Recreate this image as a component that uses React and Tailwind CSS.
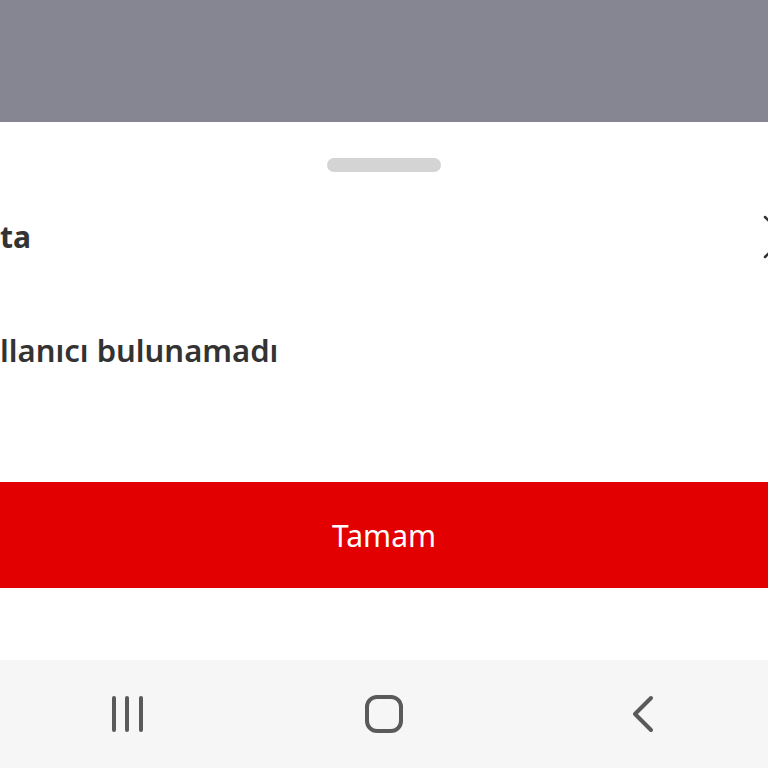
import React from "react";

const font = { fontFamily: '"Noto Sans", "Open Sans", sans-serif' };

function NavBar() {
    return (
        <div className="h-[108px] bg-[#f6f6f6] grid grid-cols-3 items-center">
            <div className="flex justify-center">
                <svg width="34" height="38" viewBox="0 0 34 38" fill="none" stroke="#5a5a5a" strokeWidth="4" strokeLinecap="round">
                    <line x1="3" y1="3" x2="3" y2="35" />
                    <line x1="16" y1="3" x2="16" y2="35" />
                    <line x1="30" y1="3" x2="30" y2="35" />
                </svg>
            </div>
            <div className="flex justify-center">
                <svg width="38" height="38" viewBox="0 0 38 38" fill="none" stroke="#5a5a5a" strokeWidth="4">
                    <rect x="2" y="2" width="34" height="34" rx="10" />
                </svg>
            </div>
            <div className="flex justify-center pl-[5px]">
                <svg width="22" height="38" viewBox="0 0 22 38" fill="none" stroke="#5a5a5a" strokeWidth="4" strokeLinecap="round" strokeLinejoin="round">
                    <polyline points="19,3 3,19 19,35" />
                </svg>
            </div>
        </div>
    );
}

export default function App() {
    return (
        <div className="w-[768px] h-[768px] overflow-hidden flex flex-col bg-white" style={font}>
            <div className="h-[122px] bg-[#868692]"></div>

            <div className="h-[538px] bg-white flex flex-col overflow-hidden">
                <div className="mt-[36px] mx-auto h-[14px] w-[114px] rounded-full bg-[#d4d4d4]"></div>

                <div className="mt-[43px] h-[44px] flex flex-row justify-between items-center">
                    <span className="whitespace-nowrap text-[30px] font-bold text-[#333333] leading-none">ta</span>
                    <svg className="-mr-[39px] shrink-0" width="44" height="44" viewBox="0 0 44 44" fill="none" stroke="#333333" strokeWidth="2.5" strokeLinecap="round">
                        <line x1="2" y1="2" x2="42" y2="42" />
                        <line x1="42" y1="2" x2="2" y2="42" />
                    </svg>
                </div>

                <div className="mt-[71px] h-[40px] flex items-center">
                    <span className="whitespace-nowrap text-[31px] font-semibold text-[#333333] leading-none">llanıcı bulunamadı</span>
                </div>

                <button className="mt-[112px] h-[106px] w-full bg-[#e20000] text-white text-[30px] flex items-center justify-center">
                    Tamam
                </button>
            </div>

            <NavBar />
        </div>
    );
}
